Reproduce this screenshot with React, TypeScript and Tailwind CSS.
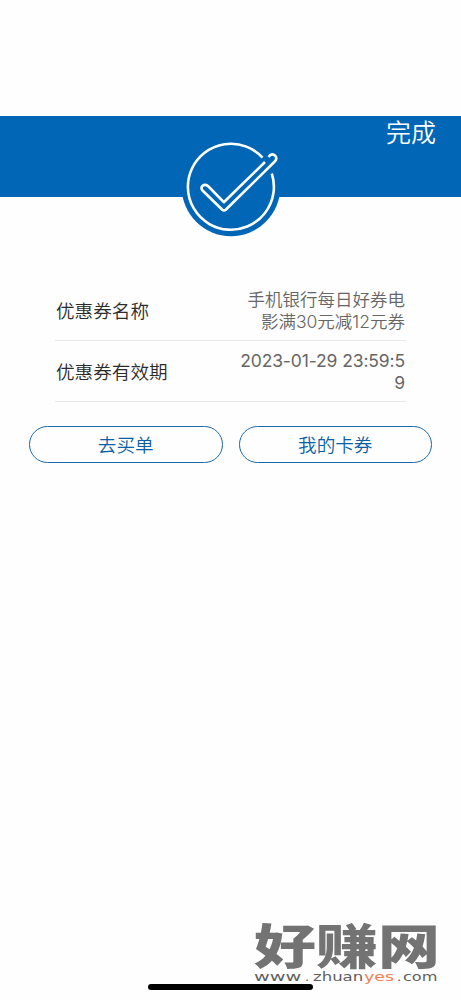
import React from "react";

const coupon = [
  { label: "优惠券名称", value: "手机银行每日好券电影满30元减12元券", style: "font-[350] pt-[2px]" },
  { label: "优惠券有效期", value: "2023-01-29 23:59:59", style: "font-normal tracking-[-0.12px] pt-px" },
];

function SuccessMark() {
  return (
    <svg
      className="absolute left-[181px] top-[21px]"
      width="100"
      height="100"
      viewBox="0 0 100 100"
      fill="none"
      stroke="#fff"
      strokeWidth="2.6"
      strokeLinecap="butt"
      strokeLinejoin="round"
    >
      <circle cx="50" cy="50" r="49.3" fill="#0066b5" stroke="none" />
      <path d="M81.5 20.6 A43 43 0 1 0 90.8 36.5" />
      <path d="M84 25 L42.8 65.2 L27 49 C23 46 18.5 50 21.5 53.5 L41 72.5 Q43 74.3 45 72.5 L94 24.3 C97.5 19.8 92.5 15.8 89 18.3 L87.5 20" />
    </svg>
  );
}

export default function App() {
  return (
    <main className="relative flex h-[1000px] w-[461px] flex-col overflow-hidden bg-[#fefefe] pt-[116px] font-['Noto_Sans_CJK_SC',sans-serif] font-[350]">
      <header className="relative h-[81px] shrink-0 bg-[#0066b5]">
        <button className="absolute right-[25px] top-[-1px] text-[25px] leading-[32px] text-white">完成</button>
        <SuccessMark />
      </header>

      <dl className="mx-[55px] mt-[83px]">
        {coupon.map((row) => (
          <div key={row.label} className="flex h-[61px] items-center justify-between border-b border-[#e8e8e8]">
            <dt className="pl-px text-[18.6px] leading-[22px] text-[#2c2c2c]">{row.label}</dt>
            <dd className={`w-[170px] break-all pr-px text-right font-[Inter,'Noto_Sans_CJK_SC',sans-serif] text-[17.5px] leading-[22px] text-[#666] ${row.style}`}>
              {row.value}
            </dd>
          </div>
        ))}
      </dl>

      <div className="mx-[29px] mt-[24px] flex gap-[16px] text-[18.6px] text-[#0b60a5]">
        <button className="h-[37px] flex-1 rounded-full border border-[#1c69a9] pb-px">去买单</button>
        <button className="h-[37px] flex-1 rounded-full border border-[#1c69a9] pb-px">我的卡券</button>
      </div>

      <div className="absolute left-[148px] top-[984px] h-[6px] w-[165px] rounded-full bg-black" />

      <div className="absolute left-[254px] top-[920px] text-[#737373]">
        <div className="h-[49px] origin-top-left scale-y-[0.77] whitespace-nowrap text-[62px] font-black leading-[60px]">好赚网</div>
        <div className="flex whitespace-nowrap font-['DejaVu_Sans',sans-serif] text-[13px] font-normal leading-[16px] text-[#606060]">
          <span className="w-[51px]"><span className="inline-block origin-left scale-x-[1.48]">www</span></span>
          <span className="w-[8px]">.</span>
          <span className="w-[51px]"><span className="inline-block origin-left scale-x-[1.27]">zhuan</span></span>
          <span className="w-[33px] text-[#f08058]"><span className="inline-block origin-left scale-x-[1.34]">yes</span></span>
          <span className="w-[6px]">.</span>
          <span className="w-[35px]"><span className="inline-block origin-left scale-x-[1.24]">com</span></span>
        </div>
      </div>
    </main>
  );
}
